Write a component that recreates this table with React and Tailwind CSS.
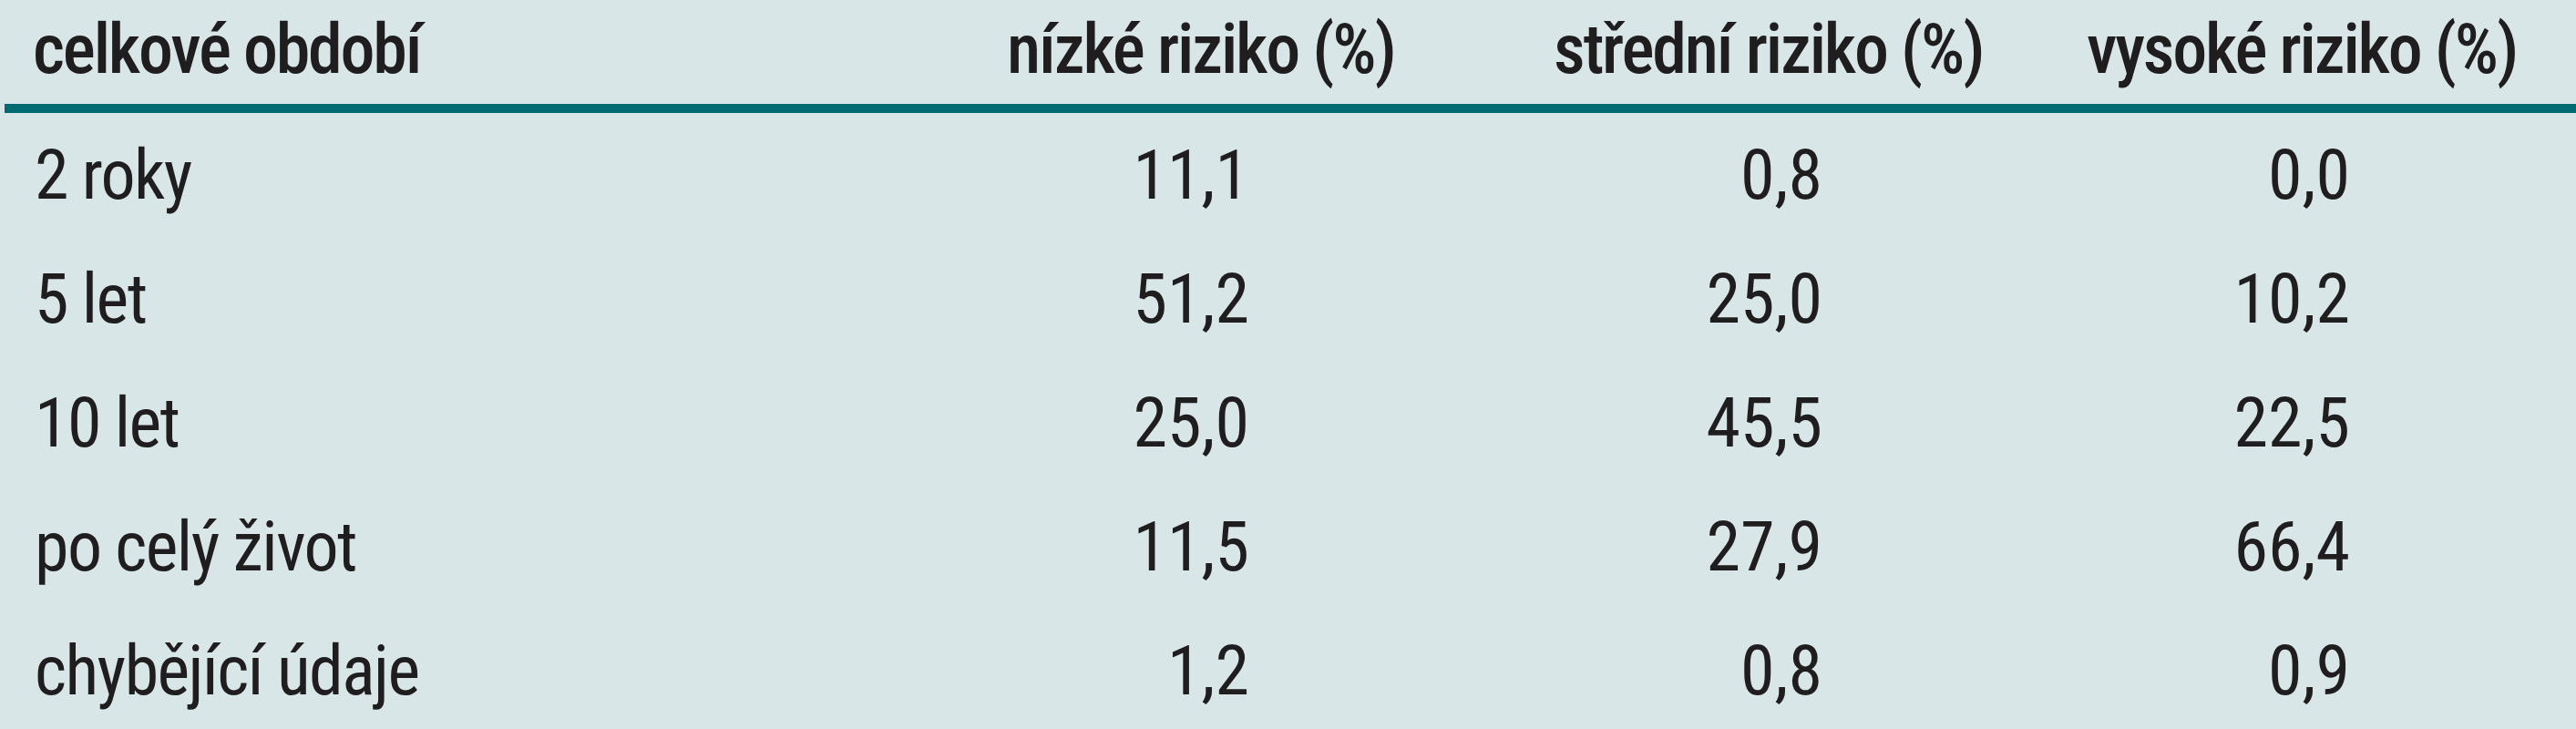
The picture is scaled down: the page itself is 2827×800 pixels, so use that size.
import React from "react";

const rows = [
  ["2 roky", "11,1", "0,8", "0,0"],
  ["5 let", "51,2", "25,0", "10,2"],
  ["10 let", "25,0", "45,5", "22,5"],
  ["po celý život", "11,5", "27,9", "66,4"],
  ["chybějící údaje", "1,2", "0,8", "0,9"],
];

const font = { fontFamily: "'Roboto Condensed', 'Liberation Sans', sans-serif" };

export default function App() {
  return (
    <div
      className="w-[2827px] h-[800px] bg-[#d9e6e8] text-[#1f1d1e] text-[76px] overflow-hidden"
      style={font}
    >
      <div className="grid grid-cols-[1105px_600px_585px_537px] h-[114px] pt-[9px] leading-[90px] font-medium tracking-[-2.2px]">
        <div className="pl-[36px]">celkové období</div>
        <div>nízké riziko (%)</div>
        <div>střední riziko (%)</div>
        <div>vysoké riziko (%)</div>
      </div>
      <div className="ml-[5px] h-[10px] bg-[#006a71]" />
      <div className="flex flex-col">
        {rows.map((r) => (
          <div
            key={r[0]}
            className="grid grid-cols-[1105px_600px_585px_537px] h-[136px] leading-[136px]"
          >
            <div className="pl-[38px] tracking-[-1.6px]">{r[0]}</div>
            <div className="text-right pr-[334px]">{r[1]}</div>
            <div className="text-right pr-[290px]">{r[2]}</div>
            <div className="text-right pr-[248px]">{r[3]}</div>
          </div>
        ))}
      </div>
    </div>
  );
}
